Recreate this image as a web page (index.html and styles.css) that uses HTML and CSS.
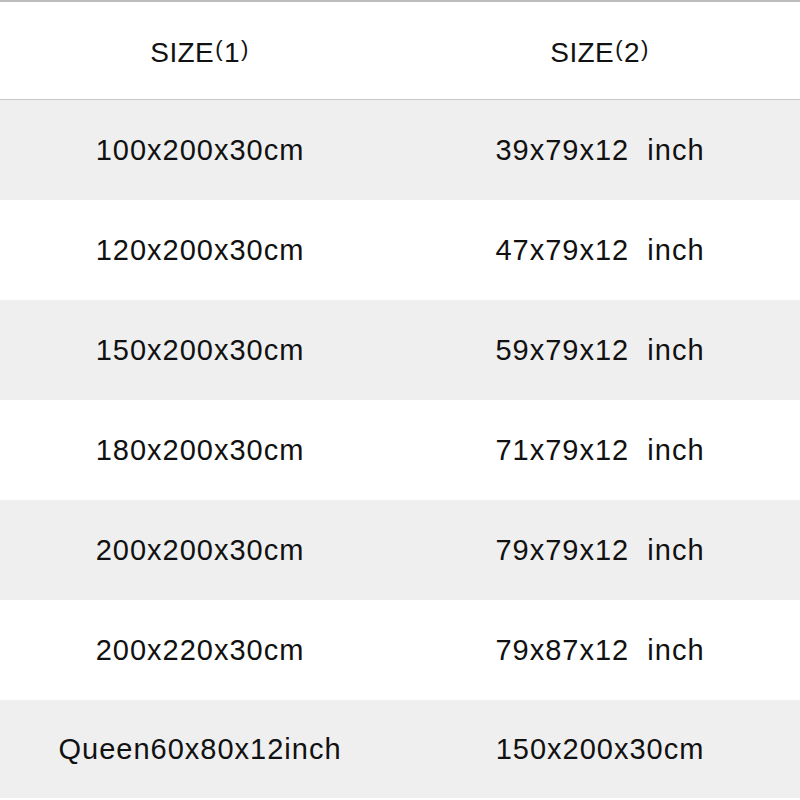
FILE: index.html
```html
<!DOCTYPE html>
<html>
<head>
<meta charset="utf-8">
<link rel="stylesheet" href="styles.css">
</head>
<body>
<div class="table">
  <div class="row head"><div class="cell">SIZE<span class="p">(</span>1<span class="p">)</span></div><div class="cell">SIZE<span class="p">(</span>2<span class="p">)</span></div></div>
  <div class="row grey"><div class="cell">100x200x30cm</div><div class="cell">39x79x12&nbsp; inch</div></div>
  <div class="row"><div class="cell">120x200x30cm</div><div class="cell">47x79x12&nbsp; inch</div></div>
  <div class="row grey"><div class="cell">150x200x30cm</div><div class="cell">59x79x12&nbsp; inch</div></div>
  <div class="row"><div class="cell">180x200x30cm</div><div class="cell">71x79x12&nbsp; inch</div></div>
  <div class="row grey"><div class="cell">200x200x30cm</div><div class="cell">79x79x12&nbsp; inch</div></div>
  <div class="row"><div class="cell">200x220x30cm</div><div class="cell">79x87x12&nbsp; inch</div></div>
  <div class="row grey last"><div class="cell">Queen60x80x12inch</div><div class="cell">150x200x30cm</div></div>
</div>
</body>
</html>
```
FILE: styles.css
```css
html, body {
  margin: 0;
  padding: 0;
  background: #ffffff;
}
.table {
  width: 800px;
  font-family: "Liberation Sans", Arial, sans-serif;
  font-size: 29px;
  color: #111111;
  letter-spacing: 1px;
}
.row {
  display: grid;
  grid-template-columns: 400px 400px;
  height: 100px;
}
.row.head {
  border-top: 2px solid #bdbdbd;
  border-bottom: 1px solid #c8c8c8;
  height: 97px;
  font-size: 28px;
  letter-spacing: 0.4px;
}
.row.grey {
  background: #efefef;
}
.row.last {
  height: 98px;
}
.cell {
  display: flex;
  align-items: center;
  justify-content: center;
  padding-top: 1px;
}
.head .cell {
  padding-top: 4px;
}
.p {
  font-size: 22px;
  position: relative;
  top: -4px;
  margin: 0 1px;
}
```
